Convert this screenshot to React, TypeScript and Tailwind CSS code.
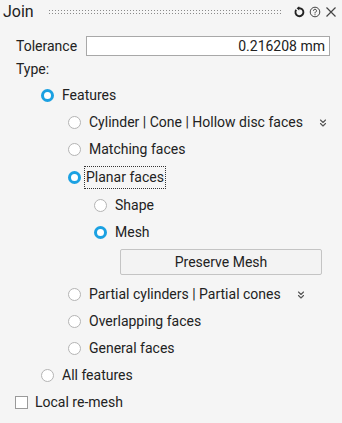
import React from "react";
import { ChevronsDown } from "lucide-react";

const font = { fontFamily: "Roboto, 'Liberation Sans', sans-serif" };

function Radio({ checked }: { checked?: boolean }) {
  return checked ? (
    <span className="w-[13px] h-[13px] rounded-full border-[3.5px] border-[#1ba1e2] bg-white shrink-0" />
  ) : (
    <span className="w-[13px] h-[13px] rounded-full border border-[#b4b4b4] bg-white shrink-0" />
  );
}

function Row({
  indent,
  checked,
  label,
  chevron,
  focus,
  tall,
}: {
  indent: string;
  checked?: boolean;
  label: string;
  chevron?: boolean;
  focus?: boolean;
  tall?: boolean;
}) {
  return (
    <div className={`${tall ? "h-[28px]" : "h-[27px]"} flex items-center ${indent}`}>
      <Radio checked={checked} />
      <span
        className={
          focus
            ? "ml-[3px] px-[1px] py-[2px] border border-dotted border-[#333] leading-[17px]"
            : "ml-[8px]"
        }
      >
        {label}
      </span>
      {chevron && <ChevronsDown className="ml-[14px] w-[12px] h-[12px] text-[#555]" strokeWidth={2.2} />}
    </div>
  );
}

export default function App() {
  return (
    <div
      className="w-[342px] h-[423px] bg-[#f5f5f5] text-[14px] text-[#222] flex flex-col overflow-hidden"
      style={font}
    >
      <div className="h-[24px] flex items-center pl-[3px] pr-[5px]">
        <span className="text-[16px] text-[#222]">Join</span>
        <svg className="ml-[15px] flex-1 h-[10px]" preserveAspectRatio="none">
          <defs>
            <pattern id="dots" width="3" height="3" patternUnits="userSpaceOnUse">
              <rect x="0" y="0" width="1" height="1" fill="#8a8a8a" />
            </pattern>
          </defs>
          <rect x="0" y="1" width="100%" height="8" fill="url(#dots)" />
        </svg>
        <div className="flex items-center gap-[4px] ml-[10px] text-[#333]">
          <svg width="12" height="12" viewBox="0 0 12 12">
            <path d="M3.2 3.8 A4 4 0 1 0 6 2.2" fill="none" stroke="#222" strokeWidth="1.9" />
            <path d="M6.2 0.2 L6.2 4.4 L3.6 2.3 Z" fill="#222" />
          </svg>
          <svg width="12" height="12" viewBox="0 0 12 12">
            <circle cx="6" cy="6" r="4.8" fill="none" stroke="#444" strokeWidth="1" />
            <path d="M4.5 4.8 A1.5 1.5 0 1 1 6.4 6.2 L6 6.6 L6 7.4" fill="none" stroke="#444" strokeWidth="1" />
            <rect x="5.5" y="8.2" width="1" height="1" fill="#444" />
          </svg>
          <svg width="12" height="12" viewBox="0 0 12 12">
            <path d="M1.5 1.5 L10.5 10.5 M10.5 1.5 L1.5 10.5" stroke="#444" strokeWidth="1.2" />
          </svg>
        </div>
      </div>

      <div className="mt-[12px] h-[20px] flex items-center pl-[16px] pr-[12px]">
        <span className="w-[70px]">Tolerance</span>
        <div className="flex-1 h-[20px] bg-white border border-[#a8a8a8] flex items-center justify-end pr-[4px]">
          0.216208 mm
        </div>
      </div>

      <div className="h-[26px] flex items-center pl-[16px]">Type:</div>

      <Row indent="pl-[41px]" checked label="Features" />
      <Row indent="pl-[68px]" label="Cylinder | Cone | Hollow disc faces" chevron />
      <Row indent="pl-[68px]" label="Matching faces" />
      <Row indent="pl-[68px]" checked label="Planar faces" focus tall />
      <Row indent="pl-[94px]" label="Shape" tall />
      <Row indent="pl-[94px]" checked label="Mesh" />

      <div className="mt-[3px] pl-[120px]">
        <div className="w-[202px] h-[26px] border border-[#c4c4c4] rounded-[2px] bg-[#f3f3f3] flex items-center justify-center">
          Preserve Mesh
        </div>
      </div>

      <div className="mt-[6px]" />
      <Row indent="pl-[68px]" label="Partial cylinders | Partial cones" chevron />
      <Row indent="pl-[68px]" label="Overlapping faces" />
      <Row indent="pl-[68px]" label="General faces" />
      <Row indent="pl-[41px]" label="All features" />

      <div className="h-[27px] flex items-center pl-[15px]">
        <span className="w-[13px] h-[13px] border border-[#9a9a9a] bg-white shrink-0" />
        <span className="ml-[7px]">Local re-mesh</span>
      </div>
    </div>
  );
}
